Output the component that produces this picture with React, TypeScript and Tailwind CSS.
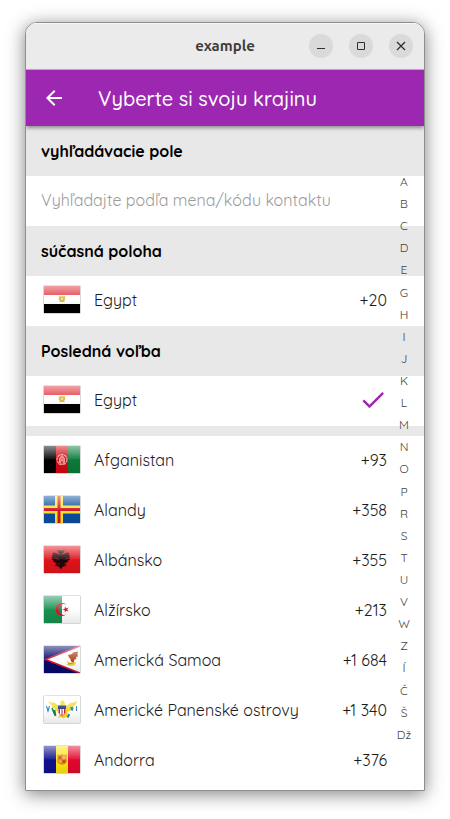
import type { ReactNode } from "react";

type Country = { name: string; code: string; flag: ReactNode };

const egypt = (
  <>
    <path fill="#e0303a" d="M0 0h36v9H0z" />
    <path fill="#fff" d="M0 9h36v9H0z" />
    <path fill="#000" d="M0 18h36v9H0z" />
    <path fill="#e0b93e" d="m15 10 2 .6 1-1.200 1 1.200 2-.6.3 3.500-1.300 1.300 1 1.200h-6l1-1.200-1.300-1.300z" />
    <path fill="#f3e0a0" d="M17 12h2v2h-2z" />
  </>
);

const afghanistan = (
  <>
    <path fill="#000" d="M0 0h12v27H0z" />
    <path fill="#d40612" d="M12 0h12v27H12z" />
    <path fill="#0b7a38" d="M24 0h12v27H24z" />
    <circle cx="18" cy="13.500" r="5" fill="none" stroke="#f0a0a0" strokeWidth="1.200" strokeDasharray="3 .6" />
    <path fill="#e87070" stroke="#f2b8b8" strokeWidth=".8" d="M15.500 12.500 18 9.500l2.500 3v4h-1.500v-2h-2v2h-1.500z" />
    <path stroke="#f0a0a0" strokeWidth="1" d="M14.500 18h7" />
  </>
);

const aland = (
  <>
    <path fill="#0b4f9e" d="M0 0h36v27H0z" />
    <path fill="#ffe52e" d="M11 0h8v27h-8zM0 9.500h36v8H0z" />
    <path fill="#d8152a" d="M13.500 0h3v27h-3zM0 12h36v3H0z" />
  </>
);

const albania = (
  <>
    <path fill="#e0131b" d="M0 0h36v27H0z" />
    <g transform="translate(-2.700 -1.200) scale(1.150 1.080)">
      <path
        fill="#1c0808"
        d="m18 8-1.200-1.200L18 6l-2-1-3 .2 2 1.300-1 .5 2 1v1.200l-2-1-3-1.200-1.500 1 .8 1.200-1.600.6 1.300 1.200-1.500.8 1.500 1-1 1 1.800.6-.6 1.400 2-.2-.6 1.800 1.800-.8-1.400 3 1.800-.5.4 1.600.8-1 2 2.900 2-2.900.8 1 .4-1.600 1.800.5-1.400-3 1.800.8-.6-1.800 2 .2-.6-1.400 1.800-.6-1-1 1.500-1-1.500-.8 1.300-1.200-1.600-.6.8-1.200-1.500-1-3 1.200-2 1V8l2-1-1-.5 2-1.300-3-.2-2 1z"
      />
      <path stroke="#c51820" strokeWidth=".6" d="m11.500 12 4 1.500M24.500 12l-4 1.500M16 17l-1.500 1.500M20 17l1.500 1.500" />
    </g>
  </>
);

const algeria = (
  <>
    <path fill="#179150" d="M0 0h18v27H0z" />
    <path fill="#fff" d="M18 0h18v27H18z" />
    <path fill="#de1428" d="M23 9.200a6.500 6.500 0 1 0 0 8.600 5.300 5.300 0 1 1 0-8.600z" />
    <path fill="#de1428" d="m18.500 13.500 2.200-.8.200-2.300 1.400 1.800 2.200-.6-1.300 1.900 1.300 1.900-2.200-.6-1.400 1.800-.2-2.300z" />
  </>
);

const samoa = (
  <>
    <path fill="#06096a" d="M0 0h36v27H0z" />
    <path fill="#fff" stroke="#d8142f" strokeWidth="1.500" d="M38-.8 1.500 13.500 38 27.800z" />
    <path fill="#b5471f" d="m24 9 4-1 1-1.500 5-1-.5 3 .5 2-2 .5.500 2-2 .4-1 3-2.500-1-.5-2.500-1.500-1.400z" />
    <path fill="#ecd23e" d="m22 14 3 2.500 3 .5 3-1 1 1.500-2 2-4 .4-4-1.500 2-.5z" />
    <path stroke="#a86c1c" strokeWidth=".7" d="m24 18 6-1.500" />
  </>
);

const virgin = (
  <>
    <path fill="#fff" d="M0 0h36v27H0z" />
    <path
      fill="#f2d92c"
      d="m3.500 5 4 1.500 3 0 3 2.500 2.500.5.500-4 2-1.500 2 1.500 .5 4 3-.5 2-2 3-.5L33 5l-1 3.500-3 2.500 1 1-3 1 0 1.500-3 1-1 3 2 3.500-3-1-2.500 1.500-2.500-1.500-3 1 1.500-3.500-1.500-3-3-1 .5-1.500L8 11.500l.5-1z"
    />
    <path fill="#fff" stroke="#cc3445" strokeWidth=".5" d="M14.500 12h7v5l-3.500 3-3.500-3z" />
    <path stroke="#d01c38" strokeWidth="1" d="M15.500 13v4.500M18 13v6.500M20.500 13v4.500" />
    <path fill="#1b3588" d="M14 9.500h8V13h-8z" />
    <path fill="none" stroke="#2282b2" strokeWidth="1.100" d="m2.500 10 1.500 5 1.500-5M32.500 10v5" />
    <path fill="#2282b2" d="m26 11.500 2.500-1 1 2-1 2.500-1.500-1zM24 17.500l2 1-1.500 3.500-1.500-1z" />
    <path fill="none" stroke="#16803c" strokeWidth="1.700" d="m8 12 3 7M10.500 14l1 6" />
  </>
);

const andorra = (
  <>
    <path fill="#10108f" d="M0 0h12v27H0z" />
    <path fill="#fbe510" d="M12 0h12v27H12z" />
    <path fill="#e4072f" d="M24 0h12v27H24z" />
    <path fill="#d8921e" d="m13 8.500 3 .5 2-1 2 1 3-.5-.5 3 .5 4-1.500 2-3.500 1.500-3.500-1.500L13 15.500l.5-4z" />
    <path fill="#cf4a27" d="M14.500 10h3v3h-3zM18.500 14h3v3h-3z" />
    <path fill="#f0b040" d="M18.500 10h3v3h-3zM14.500 14h3v2.500h-3z" />
  </>
);

const current: Country = { name: "Egypt", code: "+20", flag: egypt };

const countries: Country[] = [
  { name: "Afganistan", code: "+93", flag: afghanistan },
  { name: "Alandy", code: "+358", flag: aland },
  { name: "Albánsko", code: "+355", flag: albania },
  { name: "Alžírsko", code: "+213", flag: algeria },
  { name: "Americká Samoa", code: "+1 684", flag: samoa },
  { name: "Americké Panenské ostrovy", code: "+1 340", flag: virgin },
  { name: "Andorra", code: "+376", flag: andorra },
];

const letters = [
  "A", "B", "C", "D", "E", "G", "H", "I", "J", "K", "L", "M", "N",
  "O", "P", "R", "S", "T", "U", "V", "W", "Z", "Í", "Č", "Š", "Dž",
];

function Flag({ children }: { children: ReactNode }) {
  return (
    <svg className="mb-px h-[29px] w-[38px] shrink-0" viewBox="-1 -1 38 29" aria-hidden="true">
      <rect x="-.7" y="-.5" width="37.400" height="28.200" rx="1" fill="#000" opacity=".22" />
      <svg width="36" height="27" viewBox="0 0 36 27">
        {children}
        <rect width="36" height="27" fill="url(#flag-shade)" />
        <rect width="36" height="13.500" fill="url(#flag-gloss)" />
      </svg>
    </svg>
  );
}

function CountryRow({ country, selected }: { country: Country; selected?: boolean }) {
  return (
    <button
      type="button"
      className="flex h-[50px] w-full items-center bg-white pr-[37px] pb-0.5 pl-[17px] text-left text-base text-[#1c1c1c]"
    >
      <Flag>{country.flag}</Flag>
      <span className="ml-[13px] flex-1">{country.name}</span>
      {selected ? (
        <svg className="h-7 w-7" viewBox="0 0 24 24" fill="#9c27b0" role="img" aria-label="✓">
          <path d="M9 16.170 4.400 11.600l-1.420 1.410L9 19 21.400 6.600l-1.410-1.410z" />
        </svg>
      ) : (
        <span>{country.code}</span>
      )}
    </button>
  );
}

function SectionTitle({ children }: { children: ReactNode }) {
  return <h2 className="flex h-[50px] items-center bg-[#e8e8e8] px-[15px] text-base font-bold">{children}</h2>;
}

function WindowButton({ label, children }: { label: string; children: ReactNode }) {
  return (
    <button
      type="button"
      aria-label={label}
      className="flex h-6 w-6 items-center justify-center rounded-full bg-[#dadada]"
    >
      <svg className="h-4 w-4" viewBox="0 0 16 16" fill="none" stroke="#303030">
        {children}
      </svg>
    </button>
  );
}

export default function App() {
  return (
    <div className="flex min-h-screen bg-white px-[25px] pt-[22px] pb-7 font-['Quicksand','Inter',sans-serif] text-black">
      <svg className="absolute h-0 w-0" aria-hidden="true">
        <defs>
          <linearGradient id="flag-gloss" x1="0" x2="0" y1="0" y2="1">
            <stop offset="0" stopColor="#fff" stopOpacity=".55" />
            <stop offset="1" stopColor="#fff" stopOpacity=".06" />
          </linearGradient>
          <linearGradient id="flag-shade" x1="0" x2="0" y1="0" y2="1">
            <stop offset=".5" stopColor="#000" stopOpacity="0" />
            <stop offset="1" stopColor="#000" stopOpacity=".09" />
          </linearGradient>
        </defs>
      </svg>
      <div className="flex flex-1 flex-col overflow-hidden rounded-t-xl border border-[#8e8e8e] bg-white shadow-[0_3px_18px_rgba(0,0,0,0.5)]">
        <div className="grid h-[47px] grid-cols-[1fr_auto_1fr] items-center border-b border-[#b8b8b8] bg-[#ebebeb] px-[11px] shadow-[inset_0_1px_0_#f8f8f8]">
          <div />
          <p className="font-['Ubuntu','Open_Sans',sans-serif] text-[15px] font-bold text-[#3d3d3d]">example</p>
          <div className="flex justify-end gap-4">
            <WindowButton label="Minimalizovať">
              <path d="M4 10.500h8" />
            </WindowButton>
            <WindowButton label="Maximalizovať">
              <path d="M4.500 4.500h7v7h-7z" />
            </WindowButton>
            <WindowButton label="Zavrieť">
              <path strokeWidth="1.300" d="m4 4 8 8M12 4l-8 8" />
            </WindowButton>
          </div>
        </div>

        <header className="relative z-10 flex h-14 items-center gap-8 bg-[#9c27b0] px-4 text-white shadow-[0_2px_4px_rgba(0,0,0,0.4)]">
          <button type="button" aria-label="Späť">
            <svg className="h-6 w-6" viewBox="0 0 24 24" fill="currentColor">
              <path d="M20 11H7.830l5.590-5.590L12 4l-8 8 8 8 1.410-1.410L7.830 13H20z" />
            </svg>
          </button>
          <h1 className="pt-0.5 text-xl font-medium">Vyberte si svoju krajinu</h1>
        </header>

        <main className="relative flex-1">
          <SectionTitle>
            <label htmlFor="search">vyhľadávacie pole</label>
          </SectionTitle>
          <input
            id="search"
            type="text"
            placeholder="Vyhľadajte podľa mena/kódu kontaktu"
            className="block h-[50px] w-full bg-white pr-10 pb-0.5 pl-[15px] text-base outline-none placeholder:text-[#9b9b9b]"
          />
          <SectionTitle>súčasná poloha</SectionTitle>
          <CountryRow country={current} />
          <SectionTitle>Posledná voľba</SectionTitle>
          <CountryRow country={current} selected />
          <div className="h-2.5 bg-[#e8e8e8]" />
          <ul>
            {countries.map((country) => (
              <li key={country.name}>
                <CountryRow country={country} />
              </li>
            ))}
          </ul>
          <nav className="absolute inset-y-0 right-0 flex w-10 flex-col pt-[45px] pb-11">
            {letters.map((letter) => (
              <button key={letter} type="button" className="flex-1 text-xs leading-4 text-[#444]">
                {letter}
              </button>
            ))}
          </nav>
        </main>
      </div>
    </div>
  );
}
